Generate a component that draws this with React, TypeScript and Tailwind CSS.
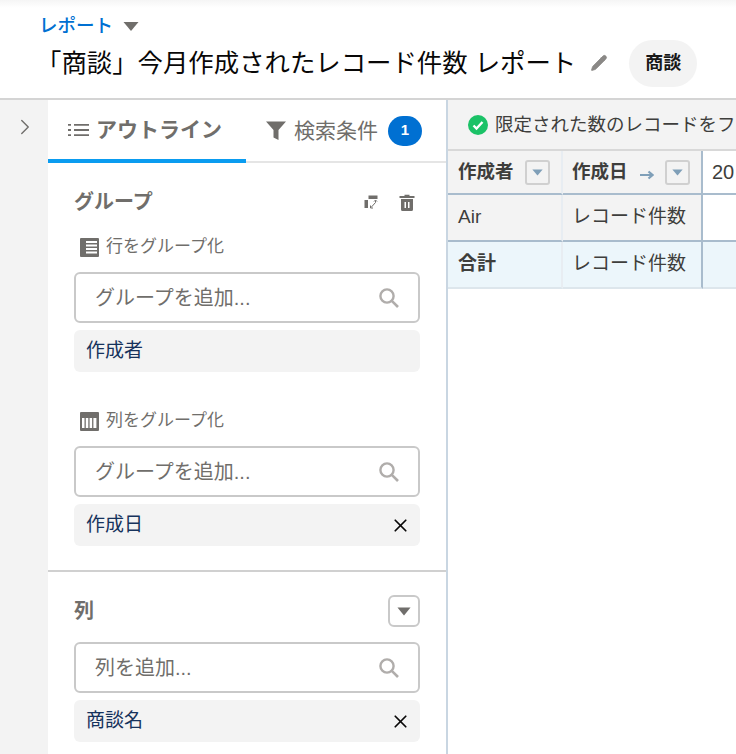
import { ChevronRight, Pencil, X } from "lucide-react";

const font = { fontFamily: '"Liberation Sans", "Noto Sans CJK JP", sans-serif' };

function Caret({ className }: { className: string }) {
  return (
    <svg viewBox="0 0 16 10" className={className}>
      <path d="M0.5 0.5h15L8 9.5z" fill="currentColor" />
    </svg>
  );
}

function ListIcon() {
  return (
    <svg viewBox="0 0 21 14" className="h-[14px] w-[21px] shrink-0 text-[#706e6b]">
      <path d="M0 1h3v1.8H0zM0 6.1h3v1.8H0zM0 11.2h3V13H0zM6 1H21v1.8H6zM6 6.1H21v1.8H6zM6 11.2H21V13H6z" fill="currentColor" />
    </svg>
  );
}

function RowsIcon() {
  return (
    <svg viewBox="0 0 19 19" className="h-[19px] w-[19px] shrink-0 text-[#706e6b]">
      <path d="M1 0h17a1 1 0 0 1 1 1v17a1 1 0 0 1-1 1H1a1 1 0 0 1-1-1V1a1 1 0 0 1 1-1z" fill="currentColor" />
      <path d="M6 3h11v2H6zM6 6.5h11v2H6zM6 10h11v2H6zM6 13.5h11v2H6z" fill="#fff" />
    </svg>
  );
}

function ColumnsIcon() {
  return (
    <svg viewBox="0 0 19 19" className="h-[19px] w-[19px] shrink-0 text-[#706e6b]">
      <path d="M1 0h17a1 1 0 0 1 1 1v17a1 1 0 0 1-1 1H1a1 1 0 0 1-1-1V1a1 1 0 0 1 1-1z" fill="currentColor" />
      <path d="M2 6h2.5v10H2zM5.8 6h2.5v10H5.8zM9.6 6h2.5v10H9.6zM13.4 6h3v10h-3z" fill="#fff" />
    </svg>
  );
}

function SwapIcon() {
  return (
    <svg viewBox="0 0 14 14" className="h-[14px] w-[14px] text-[#706e6b]">
      <path d="M4.5 0.5h9v3.5h-9zM0.5 5H4v8H0.5z" fill="currentColor" />
      <path d="M11.5 5.5v2L7 12.5M6.5 10.5v2.5h2.5M10 6.5l1.5-1.5 1.5 1.5" fill="none" stroke="currentColor" strokeWidth="1" />
    </svg>
  );
}

function TrashIcon() {
  return (
    <svg viewBox="0 0 16 17" className="h-[17px] w-[16px] text-[#706e6b]">
      <path d="M5.5 2V0.8h5V2H15.5v2H0.5V2z" fill="currentColor" />
      <path d="M2 5h12v10.5a1.5 1.5 0 0 1-1.5 1.5h-9A1.5 1.5 0 0 1 2 15.5z" fill="currentColor" />
      <path d="M5.5 8h1.5v6H5.5zM9 8h1.5v6H9z" fill="#fff" />
    </svg>
  );
}

function SearchIcon() {
  return (
    <svg viewBox="0 0 20 20" className="h-[20px] w-[20px] shrink-0 text-[#b0adab]">
      <circle cx="8" cy="8" r="6.6" fill="none" stroke="currentColor" strokeWidth="2.4" />
      <path d="M12.8 12.8L19 19" fill="none" stroke="currentColor" strokeWidth="2.6" />
    </svg>
  );
}

function AddInput({ text }: { text: string }) {
  return (
    <div className="flex h-[51px] items-center justify-between rounded-md border-2 border-[#c9c9c9] bg-white pl-[19px] pr-[19px]">
      <span className="text-[20px] text-[#706e6b]">{text}</span>
      <SearchIcon />
    </div>
  );
}

function Chip({ text, removable = true }: { text: string; removable?: boolean }) {
  return (
    <div className="mt-[7px] flex h-[42px] items-center justify-between rounded-md bg-[#f3f3f3] pl-3 pr-[9px]">
      <span className="text-[19px] text-[#16325c]">{text}</span>
      {removable && <X size={21} strokeWidth={2} className="text-[#080707]" />}
    </div>
  );
}

function Sidebar() {
  return (
    <div className="flex w-[400px] shrink-0 flex-col border-r-2 border-[#c9d6e2] bg-white">
      <div className="flex h-[63px] border-b-2 border-[#e5e5e5]">
        <div className="-mb-[2px] flex w-[198px] items-center gap-[7px] border-b-[4px] border-[#0a9cf0] pl-[20px]">
          <ListIcon />
          <span className="text-[21px] font-bold text-[#706e6b]">アウトライン</span>
        </div>
        <div className="flex items-center pl-[19px]">
          <svg viewBox="0 0 21 19" className="h-[19px] w-[22px] shrink-0 text-[#706e6b]">
            <path d="M0.5 0.5h20L13 9v10l-5-2.5V9z" fill="currentColor" />
          </svg>
          <span className="ml-[7px] text-[21px] text-[#706e6b]">検索条件</span>
          <span className="ml-[10px] flex h-[30px] w-[34px] items-center justify-center rounded-full bg-[#0070d2] text-[15px] font-bold text-white">1</span>
        </div>
      </div>

      <div className="px-[26px] pt-[26px]">
        <div className="flex h-[26px] items-center justify-between pr-[5px]">
          <span className="text-[20px] font-bold text-[#706e6b]">グループ</span>
          <div className="flex items-center gap-[21px]">
            <SwapIcon />
            <TrashIcon />
          </div>
        </div>
        <div className="mt-[22px] flex h-[20px] items-center gap-[7px] pl-[6px]">
          <RowsIcon />
          <span className="text-[17px] text-[#706e6b]">行をグループ化</span>
        </div>
        <div className="mt-[15px]">
          <AddInput text="グループを追加..." />
          <Chip text="作成者" removable={false} />
        </div>
        <div className="mt-[39px] flex h-[20px] items-center gap-[7px] pl-[6px]">
          <ColumnsIcon />
          <span className="text-[17px] text-[#706e6b]">列をグループ化</span>
        </div>
        <div className="mt-[15px]">
          <AddInput text="グループを追加..." />
          <Chip text="作成日" />
        </div>
      </div>

      <div className="mt-[24px] border-t-2 border-[#d0d0d0] px-[26px] pt-[23px]">
        <div className="flex h-[32px] items-center justify-between">
          <span className="text-[20px] font-bold text-[#706e6b]">列</span>
          <span className="flex h-[32px] w-[32px] items-center justify-center rounded-md border-2 border-[#c9c9c9]">
            <Caret className="h-[9px] w-[14px] text-[#706e6b]" />
          </span>
        </div>
        <div className="mt-[15px]">
          <AddInput text="列を追加..." />
          <Chip text="商談名" />
        </div>
      </div>
    </div>
  );
}

function ReportTable() {
  const head = "flex h-[44px] items-center border-b-2 border-[#a9bccd] bg-[#f3f3f3]";
  return (
    <div className="min-w-0 flex-1 overflow-hidden bg-white">
      <div className="flex h-[51px] items-center gap-[7px] whitespace-nowrap border-b-2 border-[#d8d8d8] bg-[#f3f3f3] pl-[20px]">
        <svg viewBox="0 0 20 20" className="h-[20px] w-[20px] shrink-0">
          <circle cx="10" cy="10" r="10" fill="#1bc267" />
          <path d="M5.5 10.5l3 3 6-6.5" fill="none" stroke="#fff" strokeWidth="2.4" />
        </svg>
        <span className="text-[18.5px] text-[#3e3e3c]">限定された数のレコードをフ</span>
      </div>
      <div className="grid grid-cols-[115px_140px_1fr]">
        <div className={`${head} justify-between border-r-2 border-r-[#e8edf2] pl-[10px] pr-[11px]`}>
          <span className="text-[18.5px] font-bold text-[#3e3e3c]">作成者</span>
          <span className="flex h-[25px] w-[25px] items-center justify-center rounded-[3px] border-2 border-[#d0d0d0]">
            <Caret className="h-[7px] w-[11px] text-[#7f9fb8]" />
          </span>
        </div>
        <div className={`${head} justify-between border-r-2 border-r-[#a9bccd] pl-[9px] pr-[11px]`}>
          <span className="text-[18.5px] font-bold text-[#3e3e3c]">作成日</span>
          <span className="flex items-center gap-[11px]">
            <svg viewBox="0 0 14 10" className="mt-[5px] h-[10px] w-[14px] text-[#7f9fb8]">
              <path d="M0 5h12M8.5 1.5L12.5 5l-4 3.5" fill="none" stroke="currentColor" strokeWidth="2.2" />
            </svg>
            <span className="flex h-[25px] w-[25px] items-center justify-center rounded-[3px] border-2 border-[#d0d0d0]">
              <Caret className="h-[7px] w-[11px] text-[#7f9fb8]" />
            </span>
          </span>
        </div>
        <div className="flex h-[44px] items-center border-b-2 border-[#a9bccd] bg-white pl-[9px] text-[20px] text-[#3e3e3c]">20</div>

        <div className="flex h-[47px] items-center border-b-2 border-r-2 border-[#a9bccd] border-r-[#e8edf2] bg-[#f3f3f3] pb-[1px] pl-[10px] text-[19px] text-[#3e3e3c]">Air</div>
        <div className="flex h-[47px] items-center border-b-2 border-r-2 border-[#a9bccd] bg-[#f3f3f3] pb-[1px] pl-[9px] text-[19px] text-[#3e3e3c]">レコード件数</div>
        <div className="h-[47px] border-b-2 border-[#a9bccd] bg-white" />

        <div className="flex h-[47px] items-center border-b-2 border-r-2 border-[#dde6ec] border-r-[#e8edf2] bg-[#ecf6fb] pl-[10px] text-[19px] font-bold text-[#3e3e3c]">合計</div>
        <div className="flex h-[47px] items-center border-b-2 border-r-2 border-[#dde6ec] border-r-[#a9bccd] bg-[#ecf6fb] pl-[9px] text-[19px] text-[#3e3e3c]">レコード件数</div>
        <div className="h-[47px] border-b-2 border-[#dde6ec] bg-[#ecf6fb]" />
      </div>
    </div>
  );
}

export default function App() {
  return (
    <div className="flex h-[754px] w-[736px] flex-col overflow-hidden bg-white" style={font}>
      <header className="h-[100px] shrink-0 border-b-2 border-[#d4d4d4] bg-gradient-to-b from-[#f5f5f5] to-white to-[8%] pl-[39px]">
        <div className="flex items-center gap-[10px] pt-[15px]">
          <span className="text-[18.5px] font-medium leading-[22px] text-[#0070d2]">レポート</span>
          <Caret className="h-[11px] w-[16px] text-[#706e6b]" />
        </div>
        <div className="mt-[1px] flex items-center">
          <span className="-ml-[3px] whitespace-nowrap text-[25.4px] leading-[50px] text-[#080707]">「商談」今月作成されたレコード件数 レポート</span>
          <Pencil size={18} fill="currentColor" strokeWidth={1} className="ml-[14px] text-[#8a8886]" />
          <span className="ml-[21px] flex h-[47px] w-[68px] items-center justify-center rounded-full bg-[#f3f3f3] text-[18px] font-bold text-[#181818]">商談</span>
        </div>
      </header>
      <div className="flex min-h-0 flex-1">
        <div className="w-[48px] shrink-0 bg-[#f3f3f3] pt-[14px] pl-[12px]">
          <ChevronRight size={26} strokeWidth={1.3} className="text-[#706e6b]" />
        </div>
        <Sidebar />
        <ReportTable />
      </div>
    </div>
  );
}
